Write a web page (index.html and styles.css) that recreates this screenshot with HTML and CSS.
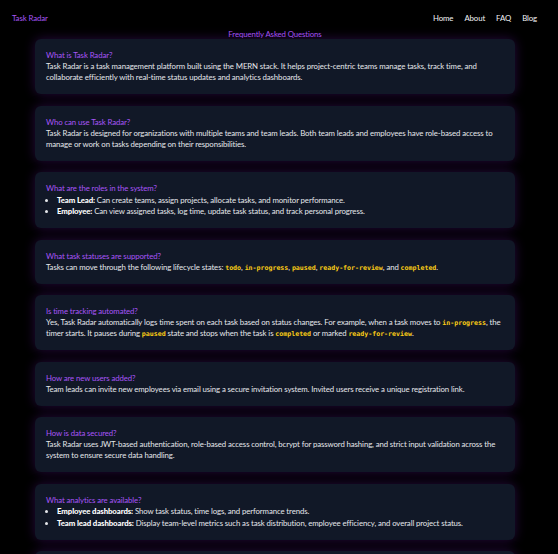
FILE: index.html
```html
<!DOCTYPE html>
<html lang="en">
<head>
<meta charset="utf-8">
<title>Task Radar - FAQ</title>
<link rel="stylesheet" href="styles.css">
</head>
<body>
<nav class="nav">
  <a class="brand" href="#">Task Radar</a>
  <div class="links">
    <a href="#">Home</a>
    <a href="#">About</a>
    <a href="#">FAQ</a>
    <a href="#">Blog</a>
  </div>
</nav>
<main class="faq">
  <h1 class="faq-title">Frequently Asked Questions</h1>
  <section class="card">
    <h2 class="q">What is Task Radar?</h2>
    <p class="a">Task Radar is a task management platform built using the MERN stack. It helps project-centric teams manage tasks, track time, and collaborate efficiently with real-time status updates and analytics dashboards.</p>
  </section>
  <section class="card">
    <h2 class="q">Who can use Task Radar?</h2>
    <p class="a">Task Radar is designed for organizations with multiple teams and team leads. Both team leads and employees have role-based access to manage or work on tasks depending on their responsibilities.</p>
  </section>
  <section class="card">
    <h2 class="q">What are the roles in the system?</h2>
    <ul class="list">
      <li><strong>Team Lead:</strong> Can create teams, assign projects, allocate tasks, and monitor performance.</li>
      <li><strong>Employee:</strong> Can view assigned tasks, log time, update task status, and track personal progress.</li>
    </ul>
  </section>
  <section class="card">
    <h2 class="q">What task statuses are supported?</h2>
    <p class="a">Tasks can move through the following lifecycle states: <code>todo</code>, <code>in-progress</code>, <code>paused</code>, <code>ready-for-review</code>, and <code>completed</code>.</p>
  </section>
  <section class="card">
    <h2 class="q">Is time tracking automated?</h2>
    <p class="a">Yes, Task Radar automatically logs time spent on each task based on status changes. For example, when a task moves to <code>in-progress</code>, the timer starts. It pauses during <code>paused</code> state and stops when the task is <code>completed</code> or marked <code>ready-for-review</code>.</p>
  </section>
  <section class="card">
    <h2 class="q">How are new users added?</h2>
    <p class="a">Team leads can invite new employees via email using a secure invitation system. Invited users receive a unique registration link.</p>
  </section>
  <section class="card">
    <h2 class="q">How is data secured?</h2>
    <p class="a">Task Radar uses JWT-based authentication, role-based access control, bcrypt for password hashing, and strict input validation across the system to ensure secure data handling.</p>
  </section>
  <section class="card">
    <h2 class="q">What analytics are available?</h2>
    <ul class="list">
      <li><strong>Employee dashboards:</strong> Show task status, time logs, and performance trends.</li>
      <li><strong>Team lead dashboards:</strong> Display team-level metrics such as task distribution, employee efficiency, and overall project status.</li>
    </ul>
  </section>
  <section class="card">
    <h2 class="q">Can I export reports?</h2>
    <p class="a">Yes, reports can be exported for further analysis.</p>
  </section>
</main>
</body>
</html>
```
FILE: styles.css
```css
* { box-sizing: border-box; }
html, body {
  margin: 0;
  padding: 0;
  background: #000;
}
body {
  font-family: Lato, "Noto Sans", sans-serif;
  font-size: 7.8px;
  letter-spacing: -0.1px;
  line-height: 11px;
  color: #e5e7eb;
}
a { text-decoration: none; }
.nav {
  display: flex;
  justify-content: space-between;
  align-items: center;
  height: 36px;
  padding: 0 21px 0 12px;
}
.brand {
  color: #a855f7;
}
.links {
  display: flex;
  gap: 11px;
}
.links a {
  color: #f3f4f6;
}
.faq {
  width: 480px;
  margin-left: 35px;
  display: flex;
  flex-direction: column;
  gap: 11.5px;
}
.faq-title {
  margin: -7px 0 -12.5px;
  font-size: inherit;
  font-weight: normal;
  color: #a855f7;
  text-align: center;
  line-height: 11px;
}
.card {
  background: #111827;
  border-radius: 6px;
  padding: 11px;
  box-shadow: 0 0 12px rgba(126, 34, 206, 0.3);
}
.q {
  margin: 0;
  font-size: inherit;
  font-weight: normal;
  color: #a855f7;
}
.a { margin: 0; }
.list {
  margin: 0;
  padding-left: 11px;
  list-style: disc;
}
.list li { margin-top: 0.5px; }
.list strong { font-weight: 900; color: #fff; }
code {
  font-family: "DejaVu Sans Mono", "Liberation Mono", monospace;
  font-size: 6.6px;
  line-height: 8px;
  letter-spacing: 0;
  font-weight: bold;
  color: #facc15;
}
```
